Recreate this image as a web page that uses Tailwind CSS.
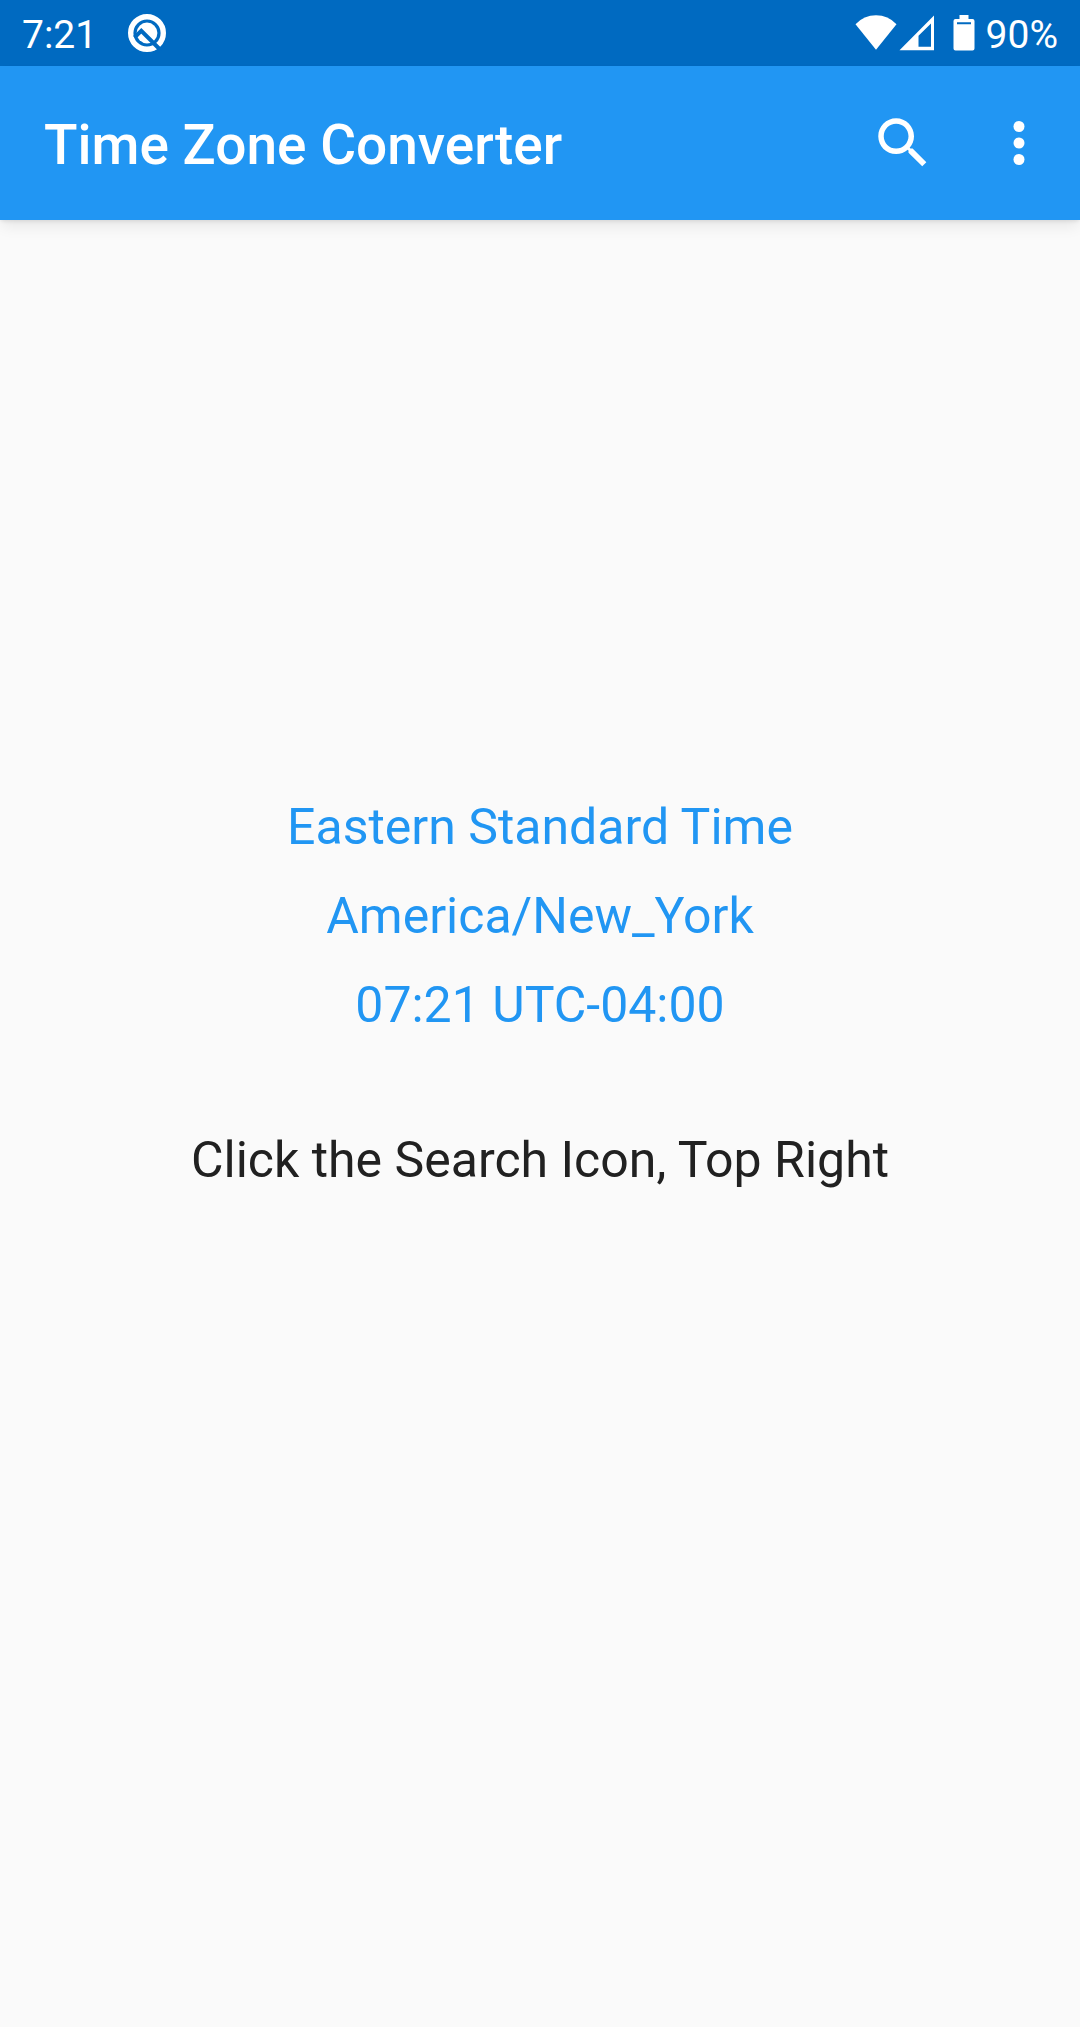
<!DOCTYPE html>
<html lang="en">
<head>
<meta charset="utf-8">
<meta name="viewport" content="width=device-width, initial-scale=1">
<title>Time Zone Converter</title>
<script src="https://cdn.jsdelivr.net/npm/@tailwindcss/browser@4"></script>
</head>
<body class="flex min-h-screen flex-col bg-[#fafafa] font-['Roboto',sans-serif] text-[#212121]">
  <!-- System status bar -->
  <div class="flex h-[66px] items-center justify-between bg-[#006ac1] px-[22px] text-[39px] leading-[44px] text-white">
    <div class="flex items-center gap-[30px]">
      <span class="pt-1">7:21</span>
      <svg class="size-10" viewBox="0 0 40 40" fill="none" aria-hidden="true">
        <circle cx="20" cy="20" r="16.3" stroke="#fff" stroke-width="5.4"/>
        <circle cx="20" cy="20" r="10.4" fill="#fff"/>
        <path d="M7.5 24.5L14.3 17.8L34 37.5" stroke="#006ac1" stroke-width="4"/>
      </svg>
    </div>
    <div class="flex items-center">
      <svg class="h-9 w-[42px]" viewBox="0 0 42 36" fill="#fff" aria-hidden="true"><path d="M0.5 9.2Q9 .3 21 .3T41.5 9.2L21 34.8Z"/></svg>
      <svg class="ml-[2px] h-9 w-9" viewBox="0 0 36 36" fill="#fff" aria-hidden="true"><path fill-rule="evenodd" d="M0.5 35.3L35 .5V35.3ZM19.5 20.8V31.8H32V8.5Z"/></svg>
      <svg class="ml-[18px] h-9 w-[22px]" viewBox="0 0 22 36" fill="#fff" aria-hidden="true"><path fill-rule="evenodd" d="M6.5 0H15.5V4H19.5Q21.5 4 21.5 6V33.5Q21.5 35.5 19.5 35.5H2.5Q.5 35.5 .5 33.5V6Q.5 4 2.5 4H6.5ZM4 7.2V9.2H18V7.2Z"/></svg>
      <span class="ml-[11px] pt-1">90%</span>
    </div>
  </div>

  <header class="relative flex h-[154px] items-center justify-between bg-[#2196f3] pr-7 pl-11 text-white shadow-[0_2px_4px_-1px_rgba(0,0,0,0.10),0_8px_14px_-2px_rgba(0,0,0,0.08)]">
    <h1 class="pt-1 text-[55px] leading-[64px] font-medium">Time Zone Converter</h1>
    <div class="flex items-center gap-[50px]">
      <button type="button" aria-label="Search">
        <svg class="size-[66px]" viewBox="0 0 24 24" fill="currentColor"><path d="M15.5 14h-.79l-.28-.27C15.41 12.59 16 11.11 16 9.5 16 5.91 13.09 3 9.5 3S3 5.91 3 9.5 5.91 16 9.5 16c1.61 0 3.09-.59 4.23-1.57l.27.28v.79l5 4.99L20.49 19l-4.99-5zm-6 0C7.01 14 5 11.99 5 9.5S7.01 5 9.5 5 14 7.01 14 9.5 11.99 14 9.5 14z"/></svg>
      </button>
      <button type="button" aria-label="More options">
        <svg class="size-[66px]" viewBox="0 0 24 24" fill="currentColor"><circle cx="12" cy="6" r="2"/><circle cx="12" cy="12" r="2"/><circle cx="12" cy="18" r="2"/></svg>
      </button>
    </div>
  </header>

  <main class="flex flex-1 flex-col items-center justify-center pb-[259px] text-center text-[50px] leading-[89px]">
    <div class="text-[#2196f3]">
      <p>Eastern Standard Time</p>
      <p>America/New_York</p>
      <p>07:21 UTC-04:00</p>
    </div>
    <p class="mt-[66px]">Click the Search Icon, Top Right</p>
  </main>
</body>
</html>
